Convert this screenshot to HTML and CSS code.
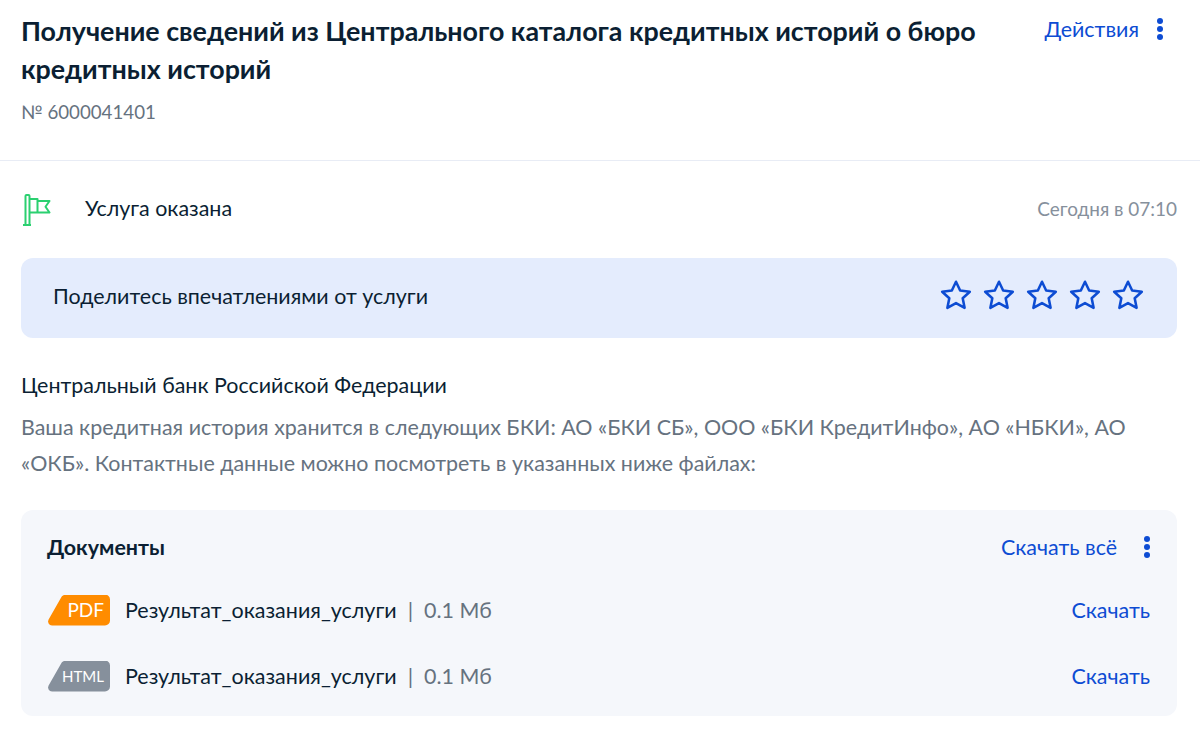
FILE: index.html
```html
<!DOCTYPE html>
<html lang="ru">

<head>
  <meta charset="UTF-8">
  <meta name="viewport" content="width=device-width, initial-scale=1.0">
  <title>Услуга оказана</title>
  <link rel="stylesheet" href="styles.css">
</head>

<body>
  <header class="head">
    <div class="head-text">
      <h1>Получение сведений из Центрального каталога кредитных историй о бюро кредитных историй</h1>
      <div class="order-num">№ 6000041401</div>
    </div>
    <div class="actions">
      <a class="link">Действия</a>
      <span class="dots"><i></i><i></i><i></i></span>
    </div>
  </header>

  <main class="content">
    <div class="status">
      <svg class="flag" width="30" height="34" viewBox="0 0 30 34" fill="none" stroke="#2bd070" stroke-width="2" stroke-linejoin="round">
        <path d="M2 32h8M4.500 32V3a1 1 0 0 1 1-1h2a1 1 0 0 1 1 1v29" />
        <path d="M8.500 6h8v13.500h-8M16.500 8H28.500l-4 5.700 4 5.800H16.500" />
      </svg>
      <span class="status-name">Услуга оказана</span>
      <span class="status-date">Сегодня в 07:10</span>
    </div>

    <div class="rate">
      <span class="rate-text">Поделитесь впечатлениями от услуги</span>
      <div class="stars">
        <svg width="34" height="34" viewBox="0 0 32 32"><path class="star" d="M16 3.500l3.900 8.300 9.100 1.100-6.700 6.200 1.800 9-8.100-4.500-8.100 4.500 1.800-9L3 12.900l9.100-1.100z" /></svg>
        <svg width="34" height="34" viewBox="0 0 32 32"><path class="star" d="M16 3.500l3.900 8.300 9.100 1.100-6.700 6.200 1.800 9-8.100-4.500-8.100 4.500 1.800-9L3 12.900l9.100-1.100z" /></svg>
        <svg width="34" height="34" viewBox="0 0 32 32"><path class="star" d="M16 3.500l3.900 8.300 9.100 1.100-6.700 6.200 1.800 9-8.100-4.500-8.100 4.500 1.800-9L3 12.900l9.100-1.100z" /></svg>
        <svg width="34" height="34" viewBox="0 0 32 32"><path class="star" d="M16 3.500l3.900 8.300 9.100 1.100-6.700 6.200 1.800 9-8.100-4.500-8.100 4.500 1.800-9L3 12.900l9.100-1.100z" /></svg>
        <svg width="34" height="34" viewBox="0 0 32 32"><path class="star" d="M16 3.500l3.900 8.300 9.100 1.100-6.700 6.200 1.800 9-8.100-4.500-8.100 4.500 1.800-9L3 12.900l9.100-1.100z" /></svg>
      </div>
    </div>

    <div class="org">Центральный банк Российской Федерации</div>
    <p class="note">Ваша кредитная история хранится в следующих БКИ: АО «БКИ СБ», ООО «БКИ КредитИнфо», АО «НБКИ», АО «ОКБ». Контактные данные можно посмотреть в указанных ниже файлах:</p>

    <section class="docs">
      <div class="docs-head">
        <h2>Документы</h2>
        <a class="link">Скачать всё</a>
        <span class="dots"><i></i><i></i><i></i></span>
      </div>
      <div class="doc">
        <span class="badge badge-pdf">PDF</span>
        <span class="doc-name">Результат_оказания_услуги</span>
        <span class="doc-size">|&nbsp; 0.1 Мб</span>
        <a class="link">Скачать</a>
      </div>
      <div class="doc">
        <span class="badge badge-html">HTML</span>
        <span class="doc-name">Результат_оказания_услуги</span>
        <span class="doc-size">|&nbsp; 0.1 Мб</span>
        <a class="link">Скачать</a>
      </div>
    </section>
  </main>
</body>

</html>
```

FILE: styles.css
```css
body {
  margin: 0;
  font-family: Lato, "Noto Sans", sans-serif;
  font-size: 21.45px;
  line-height: 30px;
  color: #0b1f33;
  background-color: #fff;
}

.head {
  display: flex;
  align-items: flex-start;
  justify-content: space-between;
  padding: 12px 37px 36px 21px;
  border-bottom: 1px solid #e8ecf5;
}

.head-text {
  width: 980px;
}

h1 {
  margin: 0;
  font-size: 26.85px;
  line-height: 38px;
  font-weight: 700;
}

.order-num {
  margin-top: 12px;
  font-size: 18.7px;
  line-height: 24px;
  color: #66727f;
}

.actions {
  display: flex;
  align-items: center;
  gap: 18px;
  padding-top: 2px;
}

.link {
  color: #0d4cd3;
}

.dots {
  display: inline-flex;
  flex-direction: column;
  gap: 2px;
  width: 6px;
}

.dots i {
  display: block;
  width: 6px;
  height: 6px;
  border-radius: 50%;
  background-color: #0d4cd3;
}

.content {
  padding: 0 23px 0 21px;
}

.status {
  display: flex;
  align-items: center;
  height: 97px;
}

.flag {
  margin-right: 34px;
}

.status-name {
  flex: 1;
  padding-bottom: 4px;
}

.status-date {
  padding-bottom: 2px;
  font-size: 18.95px;
  color: #86909c;
}

.rate {
  display: flex;
  align-items: center;
  justify-content: space-between;
  height: 80px;
  padding: 0 32px;
  background-color: #e4ecfd;
  border-radius: 12px;
}

.rate-text {
  padding-bottom: 4px;
}

.stars {
  display: flex;
  gap: 9px;
  margin-top: -6px;
}

.star {
  fill: none;
  stroke: #0d4cd3;
  stroke-width: 2.4;
  stroke-linejoin: round;
}

.org {
  margin-top: 32px;
}

.note {
  margin: 9px 0 0;
  color: #66727f;
  line-height: 36px;
}

.docs {
  margin-top: 29px;
  padding: 20px 27px 7px 26px;
  background-color: #f5f7fb;
  border-radius: 12px;
}

.docs-head {
  display: flex;
  align-items: center;
  gap: 27px;
  height: 34px;
  margin-bottom: 13px;
}

h2 {
  flex: 1;
  margin: 0;
  font-size: 21.45px;
  font-weight: 700;
}

.doc {
  display: flex;
  align-items: center;
  height: 66px;
}

.badge {
  display: flex;
  align-items: center;
  justify-content: flex-end;
  flex-shrink: 0;
  width: 62px;
  height: 31px;
  margin-left: 1px;
  margin-right: 15px;
  padding-right: 6px;
  box-sizing: border-box;
  color: #fff;
  clip-path: path("M20 0H57a5 5 0 0 1 5 5V26a5 5 0 0 1-5 5H4a4 4 0 0 1-3.400-6L13 3.200A6 6 0 0 1 18 0Z");
}

.badge-pdf {
  background-color: #ff8c00;
  font-size: 19px;
}

.badge-html {
  background-color: #86909c;
  font-size: 15px;
}

.doc-name {
  margin-right: 11px;
  font-size: 21.5px;
}

.doc-size {
  flex: 1;
  color: #66727f;
}
```
